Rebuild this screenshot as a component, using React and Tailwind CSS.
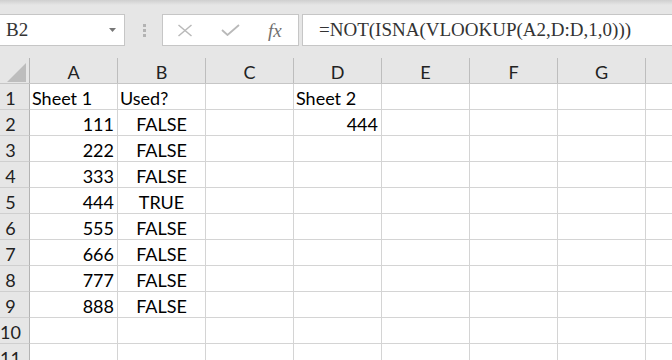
const columns = ["A", "B", "C", "D", "E", "F", "G", "H"];

// cell value + alignment per column (A..D), rest empty
const rows = [
  [{ v: "Sheet 1", a: "l" }, { v: "Used?", a: "l" }, null, { v: "Sheet 2", a: "l" }],
  [{ v: "111", a: "r" }, { v: "FALSE", a: "c" }, null, { v: "444", a: "r" }],
  [{ v: "222", a: "r" }, { v: "FALSE", a: "c" }],
  [{ v: "333", a: "r" }, { v: "FALSE", a: "c" }],
  [{ v: "444", a: "r" }, { v: "TRUE", a: "c" }],
  [{ v: "555", a: "r" }, { v: "FALSE", a: "c" }],
  [{ v: "666", a: "r" }, { v: "FALSE", a: "c" }],
  [{ v: "777", a: "r" }, { v: "FALSE", a: "c" }],
  [{ v: "888", a: "r" }, { v: "FALSE", a: "c" }],
  [],
  [],
];

const alignClass = {
  l: "justify-start pl-[2px]",
  r: "justify-end pr-[3px]",
  c: "justify-center",
};

function FormulaBar() {
  return (
    <div className="h-[58px] bg-[#e6e6e6] shrink-0">
      <div className="h-[5px] bg-gradient-to-b from-[#cfcfcf] to-[#e6e6e6]" />
      <div className="mt-[9px] flex h-[32px]">
        {/* Name box */}
        <div className="ml-[-1px] w-[126px] border border-[#c6c6c6] bg-white flex items-center justify-between pl-[6px] pr-[7px]">
          <span className="font-['Liberation_Serif',serif] text-[19px] text-[#333]">B2</span>
          <svg width="8" height="4" viewBox="0 0 8 4">
            <path d="M0 0 H7 L3.5 4 Z" fill="#777" />
          </svg>
        </div>

        {/* grip dots */}
        <div className="w-[37px] flex flex-col items-center justify-center gap-[2px] pt-[1px] pl-[1px]">
          <div className="w-[3px] h-[3px] bg-[#b3b3b3]" />
          <div className="w-[3px] h-[3px] bg-[#b3b3b3]" />
          <div className="w-[3px] h-[3px] bg-[#b3b3b3]" />
        </div>

        {/* cancel / enter / fx */}
        <div className="w-[137px] border border-[#c6c6c6] bg-white flex items-center">
          <svg width="16" height="13" viewBox="0 0 16 13" className="ml-[14px]">
            <path d="M1.5 1 L14.5 12 M14.5 1 L1.5 12" stroke="#b9b9b9" strokeWidth="1.5" fill="none" />
          </svg>
          <svg width="19" height="12" viewBox="0 0 19 12" className="ml-[28px]">
            <path d="M1 6 L6.5 11 L18 1" stroke="#b9b9b9" strokeWidth="1.8" fill="none" />
          </svg>
          <span className="ml-[28px] font-['Liberation_Serif',serif] italic text-[19px] text-[#707070] leading-none">
            fx
          </span>
        </div>

        {/* formula input */}
        <div className="ml-[3px] flex-1 mr-[-2px] border border-[#c6c6c6] bg-white flex items-center pl-[16px]">
          <span className="font-['Liberation_Serif',serif] text-[19px] text-[#333] whitespace-nowrap">
            =NOT(ISNA(VLOOKUP(A2,D:D,1,0)))
          </span>
        </div>
      </div>
    </div>
  );
}

function HeaderRow() {
  return (
    <div className="flex h-[26px] bg-[#e6e6e6] border-b border-[#c6c6c6] shrink-0">
      <div className="relative w-[30px] shrink-0 border-r border-[#b4b4b4]">
        <svg width="29" height="25" viewBox="0 0 29 25" className="absolute left-0 top-0">
          <path d="M26 5 L26 24 L7 24 Z" fill="#bdbdbd" />
        </svg>
      </div>
      {columns.map((c) => (
        <div
          key={c}
          className="w-[88px] shrink-0 border-r border-[#bdbdbd] flex items-center justify-center pt-[4px] text-[18px] text-[#222]"
        >
          {/* column H is cut off before its letter shows */}
          {c === "H" ? "" : c}
        </div>
      ))}
    </div>
  );
}

function SheetRow({ num, cells }) {
  return (
    <div className="flex h-[26px] shrink-0">
      <div className="w-[30px] shrink-0 bg-[#e6e6e6] border-r border-b border-r-[#b4b4b4] border-b-[#cfcfcf] flex items-center pt-[4px]">
        <span className="w-[21px] text-center text-[18px] text-[#222]">{num}</span>
      </div>
      {columns.map((c, i) => {
        const cell = cells[i];
        return (
          <div
            key={c}
            className={
              "w-[88px] shrink-0 border-r border-b border-[#d4d4d4] flex items-center pt-[4px] text-[18px] text-black whitespace-nowrap " +
              (cell ? alignClass[cell.a] : "")
            }
          >
            {cell ? cell.v : ""}
          </div>
        );
      })}
    </div>
  );
}

export default function App() {
  return (
    <div className="w-[672px] h-[360px] overflow-hidden bg-white flex flex-col font-['Lato',sans-serif]">
      <FormulaBar />
      <HeaderRow />
      {rows.map((cells, i) => (
        <SheetRow key={i} num={i + 1} cells={cells} />
      ))}
    </div>
  );
}
